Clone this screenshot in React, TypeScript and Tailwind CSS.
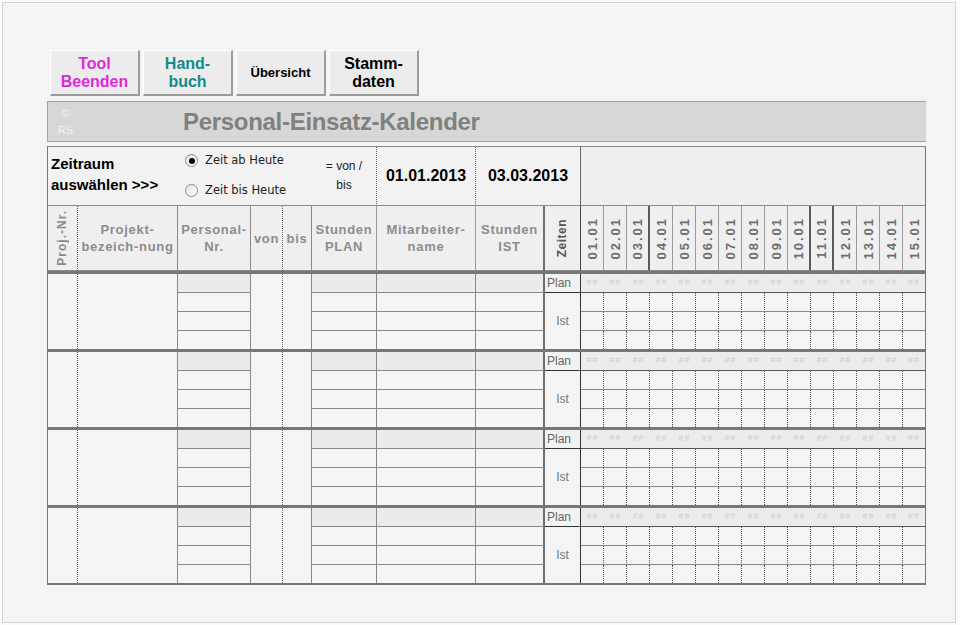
import React from "react";

const COLS =
  "grid grid-cols-[31px_100px_73px_32px_29px_65px_99px_69px_36px_repeat(15,23px)]";

const dates = Array.from({ length: 15 }, (_, i) => String(i + 1).padStart(2, "0") + ".01");

function Radio({ checked, label }: { checked?: boolean; label: string }) {
  return (
    <div className="flex items-center gap-[7px]">
      <span className="flex h-[13px] w-[13px] items-center justify-center rounded-full border border-[#8a8a8a] bg-gradient-to-br from-[#e2e2e2] to-white">
        {checked && <span className="h-[6px] w-[6px] rounded-full bg-black" />}
      </span>
      <span className="font-['DejaVu_Sans',sans-serif] text-[11.5px] text-[#222]">{label}</span>
    </div>
  );
}

function ToolButton({ children, className }: { children: React.ReactNode; className: string }) {
  return (
    <button
      className={`flex h-[46px] w-[90px] flex-col items-center justify-center border-t border-l border-t-white border-l-white border-r-2 border-b-2 border-r-[#9c9c9c] border-b-[#9c9c9c] bg-[#ececec] font-bold leading-[18px] ${className}`}
    >
      {children}
    </button>
  );
}

function HeaderRow() {
  const head = "flex h-[65px] items-center justify-center bg-[#efefef] border-b border-b-[#8a8a8a] text-center text-[13px] font-bold leading-[17px] tracking-[0.7px] text-[#8c8c8c]";
  return (
    <div className={COLS}>
      <div className={`${head} border-l border-l-[#777] border-r border-r-[#555] [border-right-style:dotted]`}>
        <span className="rotate-180 text-[12px] tracking-[1px] text-[#8a8a8a] [writing-mode:vertical-rl]">Proj.-Nr.</span>
      </div>
      <div className={`${head} border-r border-r-[#888]`}>
        Projekt-
        <br />
        bezeich-nung
      </div>
      <div className={`${head} border-r border-r-[#888]`}>
        Personal-
        <br />
        Nr.
      </div>
      <div className={`${head} border-r border-r-[#666] [border-right-style:dotted]`}>von</div>
      <div className={`${head} border-r border-r-[#888]`}>bis</div>
      <div className={`${head} border-r border-r-[#999]`}>
        Stunden
        <br />
        PLAN
      </div>
      <div className={`${head} border-r border-r-[#999]`}>
        Mitarbeiter-
        <br />
        name
      </div>
      <div className={`${head} border-r-2 border-r-[#6e6e6e]`}>
        Stunden
        <br />
        IST
      </div>
      <div className={`${head} border-r border-r-[#444]`}>
        <span className="rotate-180 text-[12px] tracking-[0.5px] text-[#555] [writing-mode:vertical-rl]">Zeiten</span>
      </div>
      {dates.map((d, i) => (
        <div
          key={d}
          className={`${head} ${
            i === 2 || i === 9 || i === 10
              ? "border-r-2 border-r-[#5a5a5a]"
              : i === 14
              ? "border-r border-r-[#777]"
              : "border-r border-r-[#9a9a9a]"
          }`}
        >
          <span className="rotate-180 text-[13px] tracking-[2px] text-[#6e6e6e] [writing-mode:vertical-rl]">{d}</span>
        </div>
      ))}
    </div>
  );
}

function Group() {
  const split = [0, 1, 2, 3];
  const cell = (row: number, right: string) =>
    `${right} ${row === 0 ? "bg-[#ebebeb]" : "bg-[#f5f5f5]"} ${row < 3 ? "border-b border-b-[#888]" : ""}`;
  return (
    <div className={`${COLS} grid-rows-[19px_19px_19px_18px] grid-flow-col`}>
      <div className="row-span-4 border-l border-l-[#777] border-r border-r-[#555] [border-right-style:dotted]" />
      <div className="row-span-4 border-r border-r-[#888]" />
      {split.map((r) => (
        <div key={"p" + r} className={cell(r, "border-r border-r-[#888]")} />
      ))}
      <div className="row-span-4 border-r border-r-[#666] [border-right-style:dotted]" />
      <div className="row-span-4 border-r border-r-[#888]" />
      {split.map((r) => (
        <div key={"s" + r} className={cell(r, "border-r border-r-[#888]")} />
      ))}
      {split.map((r) => (
        <div key={"m" + r} className={cell(r, "border-r border-r-[#888]")} />
      ))}
      {split.map((r) => (
        <div key={"i" + r} className={cell(r, "border-r-2 border-r-[#6e6e6e]")} />
      ))}
      <div className="flex items-center border-r border-b border-r-[#333] border-b-[#333] bg-[#f2f2f2] pl-[2px] text-[12px] text-[#666]">
        Plan
      </div>
      <div className="row-span-3 flex items-center justify-center border-r border-r-[#333] text-[12px] text-[#777]">
        Ist
      </div>
      {dates.map((d, i) => (
        <React.Fragment key={d}>
          <div
            className={`flex items-center justify-center border-b border-b-[#555] bg-[#ececec] text-[9px] tracking-[1px] text-[#cdcdcd] ${
              i === 14 ? "border-r border-r-[#777]" : ""
            }`}
          >
            ##
          </div>
          {[1, 2, 3].map((r) => (
            <div
              key={r}
              className={`${
                i === 14
                  ? "border-r border-r-[#777]"
                  : "border-r border-r-[#555] [border-right-style:dotted]"
              } ${r < 3 ? "border-b border-b-[#888]" : ""}`}
            />
          ))}
        </React.Fragment>
      ))}
    </div>
  );
}

export default function App() {
  return (
    <div className="h-[625px] w-[960px] overflow-hidden bg-[#fbfbfb] pt-[2px] pl-[2px] font-['Liberation_Sans',Arial,sans-serif]">
      <div className="h-[621px] w-[954px] border border-[#d4d4d4] bg-[#f4f4f4] pt-[47px] pl-[44px]">
        <div className="flex gap-[3px] pl-[3px]">
          <ToolButton className="text-[16px] text-[#dd2ad8]">
            <span>Tool</span>
            <span>Beenden</span>
          </ToolButton>
          <ToolButton className="text-[16px] text-[#168a8a]">
            <span>Hand-</span>
            <span>buch</span>
          </ToolButton>
          <ToolButton className="text-[13px] text-black">Übersicht</ToolButton>
          <ToolButton className="text-[16px] text-black">
            <span>Stamm-</span>
            <span>daten</span>
          </ToolButton>
        </div>

        <div className="mt-[5px] flex h-[41px] w-[879px] items-center border-t border-l border-b border-[#a2a2a2] bg-[#d7d7d7]">
          <div className="flex w-[33px] flex-col items-center pl-[2px] text-[11px] leading-[17px] text-[#f2f2f2]">
            <span>©</span>
            <span>RS</span>
          </div>
          <div className="ml-[102px] text-[24px] font-bold tracking-[-0.3px] text-[#808080]">
            Personal-Einsatz-Kalender
          </div>
        </div>

        <div className="mt-[4px]">
          <div className={COLS}>
            <div className="col-span-2 h-[60px] border-t border-b border-l border-[#8a8a8a] border-l-[#777] bg-[#f2f2f2] pt-[6px] pl-[3px] text-[15px] font-bold leading-[21px] text-black">
              Zeitraum
              <br />
              auswählen &gt;&gt;&gt;
            </div>
            <div className="col-span-3 flex flex-col justify-center gap-[12px] border-t border-b border-[#8a8a8a] bg-[#f2f2f2] pl-[7px] pb-[1px]">
              <Radio checked label="Zeit ab Heute" />
              <Radio label="Zeit bis Heute" />
            </div>
            <div className="flex flex-col items-center justify-center border-t border-b border-r border-[#8a8a8a] border-r-[#666] bg-[#f2f2f2] text-[12px] leading-[19px] text-[#222] [border-right-style:dotted]">
              <span>= von /</span>
              <span>bis</span>
            </div>
            <div className="flex items-center justify-center border-t border-b border-r border-[#8a8a8a] border-r-[#666] bg-[#f2f2f2] text-[16px] font-bold text-black [border-right-style:dotted]">
              01.01.2013
            </div>
            <div className="col-span-2 flex items-center justify-center border-t border-b border-r border-[#8a8a8a] border-r-[#666] bg-[#f2f2f2] text-[16px] font-bold text-black">
              03.03.2013
            </div>
            <div className="col-span-15 border-t border-b border-r border-[#8a8a8a] border-r-[#777] bg-[#eeeeee]" />
          </div>

          <HeaderRow />

          {[0, 1, 2, 3].map((g) => (
            <React.Fragment key={g}>
              <div className="h-[3px] w-[879px] bg-[#777]" />
              <Group />
            </React.Fragment>
          ))}
          <div className="h-[2px] w-[879px] bg-[#777]" />
        </div>
      </div>
    </div>
  );
}
